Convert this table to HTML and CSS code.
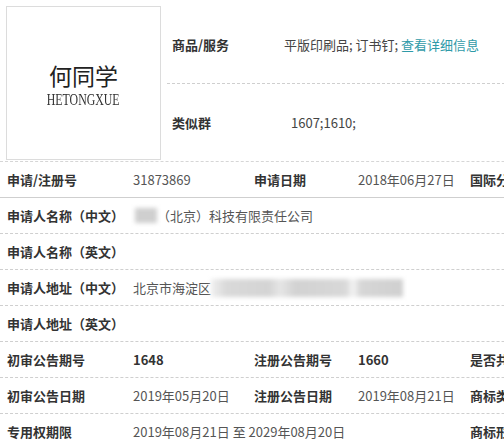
FILE: index.html
```html
<!DOCTYPE html>
<html lang="zh-CN">
<head>
<meta charset="utf-8">
<link rel="stylesheet" href="styles.css">
</head>
<body>
<div class="page">
  <div class="top">
    <div class="logo">
      <div class="logo-cn">何同学</div>
      <div class="logo-en">HETONGXUE</div>
    </div>
    <div class="top-info">
      <div class="top-row">
        <span class="top-label">商品/服务</span>
        <span class="top-value">平版印刷品; 订书钉; <a class="link">查看详细信息</a></span>
      </div>
      <div class="top-row dashed">
        <span class="top-label">类似群</span>
        <span class="top-value group">1607;1610;</span>
      </div>
    </div>
  </div>
  <div class="table">
    <div class="row first">
      <span class="lbl">申请/注册号</span>
      <span class="val">31873869</span>
      <span class="lbl">申请日期</span>
      <span class="val">2018年06月27日</span>
      <span class="lbl">国际分类</span>
    </div>
    <div class="row">
      <span class="lbl">申请人名称（中文）</span>
      <span class="val span4"><span class="blur small"></span>（北京）科技有限责任公司</span>
    </div>
    <div class="row">
      <span class="lbl">申请人名称（英文）</span>
      <span class="val span4"></span>
    </div>
    <div class="row">
      <span class="lbl">申请人地址（中文）</span>
      <span class="val span4">北京市海淀区<span class="blur wide"></span></span>
    </div>
    <div class="row">
      <span class="lbl">申请人地址（英文）</span>
      <span class="val span4"></span>
    </div>
    <div class="row">
      <span class="lbl">初审公告期号</span>
      <span class="val strong">1648</span>
      <span class="lbl">注册公告期号</span>
      <span class="val strong">1660</span>
      <span class="lbl">是否共有商标</span>
    </div>
    <div class="row">
      <span class="lbl">初审公告日期</span>
      <span class="val">2019年05月20日</span>
      <span class="lbl">注册公告日期</span>
      <span class="val">2019年08月21日</span>
      <span class="lbl">商标类型</span>
    </div>
    <div class="row">
      <span class="lbl">专用权期限</span>
      <span class="val span3">2019年08月21日 至 2029年08月20日</span>
      <span class="lbl">商标形式</span>
    </div>
  </div>
</div>
</body>
</html>
```
FILE: styles.css
```css
* { box-sizing: border-box; }
html, body { margin: 0; padding: 0; background: #fff; }
body {
  width: 504px;
  height: 446px;
  overflow: hidden;
  font-family: "Noto Sans CJK SC", "Noto Sans", sans-serif;
  font-size: 13px;
  color: #333;
}
.page { width: 640px; }

.top {
  display: flex;
  height: 161px;
  padding: 6px 0 0 6px;
}
.logo {
  width: 155px;
  height: 154px;
  border: 1px solid #dcdcdc;
  display: flex;
  flex-direction: column;
  align-items: center;
  justify-content: center;
  padding-top: 4px;
}
.logo-cn {
  font-size: 23px;
  line-height: 24px;
  color: #222;
}
.logo-en {
  font-family: "Liberation Serif", "Times New Roman", serif;
  font-size: 16px;
  line-height: 16px;
  color: #333;
  transform: scaleX(0.74);
  margin-top: 5px;
}
.top-info {
  flex: 1;
  margin-left: 6px;
  display: flex;
  flex-direction: column;
}
.top-row {
  height: 77px;
  display: flex;
  align-items: center;
  padding-left: 5px;
}
.top-row.dashed {
  border-top: 1px dashed #cfcfcf;
}
.top-label {
  width: 112px;
  font-weight: bold;
  color: #333;
}
.top-value { color: #444; }
.top-value.group { padding-left: 7px; }
.link { color: #2f9aa8; text-decoration: none; }

.table { width: 640px; }
.row {
  display: grid;
  grid-template-columns: 126px 121px 104px 112px 177px;
  height: 36px;
  border-top: 1px dashed #cfcfcf;
  align-items: center;
}
.row.first { border-top-color: #d6d6d6; }
.row + .row:nth-child(2) { border-top-style: solid; }
.lbl {
  padding-left: 7px;
  font-weight: bold;
  color: #333;
  white-space: nowrap;
}
.val {
  padding-left: 7px;
  color: #555;
  white-space: nowrap;
  display: flex;
  align-items: center;
}
.val.strong { font-weight: bold; color: #333; }
.span4 { grid-column: 2 / 6; }
.span3 { grid-column: 2 / 5; }

.blur {
  display: inline-block;
  filter: blur(2px);
}
.blur.small {
  width: 22px;
  height: 15px;
  background: #cfcfcf;
  margin-left: 2px;
}
.blur.wide {
  width: 192px;
  height: 18px;
  background: linear-gradient(to right, #f0f0f0 0%, #d9d9d9 8%, #d4d4d4 30%, #e6e6e6 36%, #d2d2d2 44%, #d8d8d8 70%, #f4f4f4 74%, #d6d6d6 78%, #d0d0d0 100%);
}
```
